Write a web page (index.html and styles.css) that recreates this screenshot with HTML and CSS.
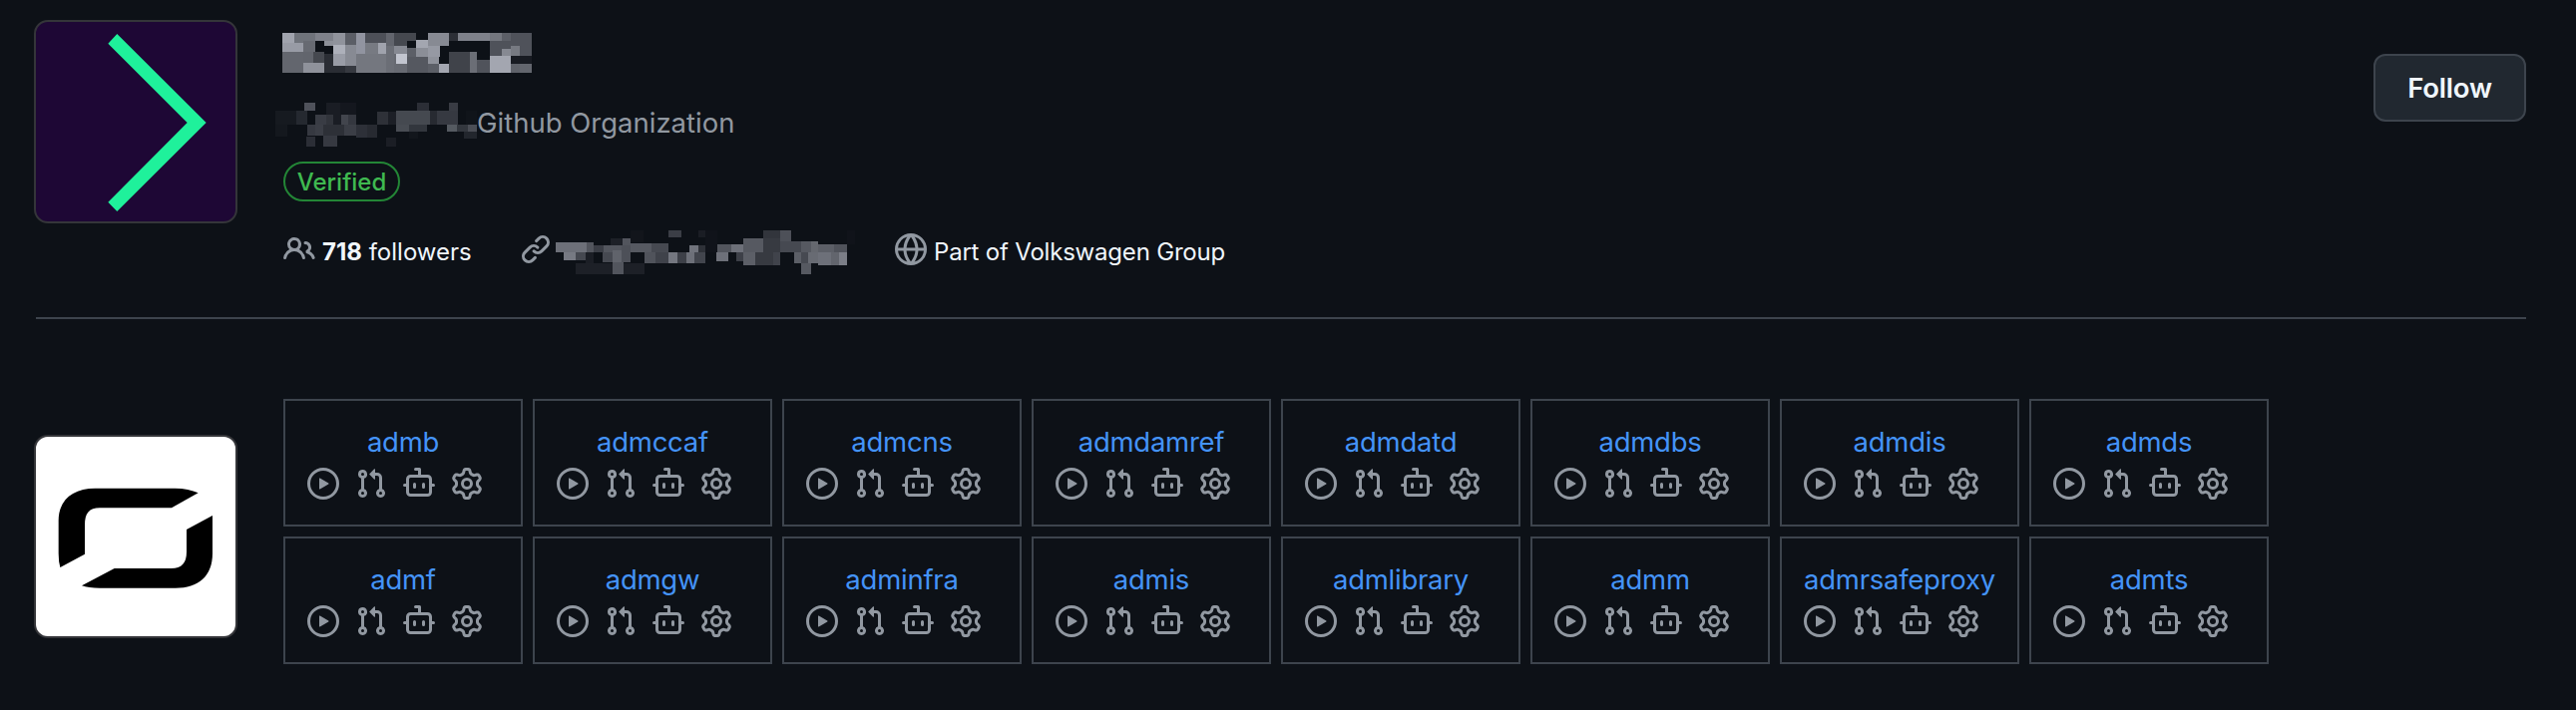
FILE: index.html
```
<!DOCTYPE html>
<html lang="en">
<head>
<meta charset="utf-8">
<title>Organization overview</title>
<link rel="stylesheet" href="styles.css">
</head>
<body>
<svg class="sprite" aria-hidden="true">
  <symbol id="people" viewBox="0 0 16 16"><path d="M2 5.5a3.5 3.5 0 1 1 5.898 2.549 5.508 5.508 0 0 1 3.034 4.084.75.75 0 1 1-1.482.235 4 4 0 0 0-7.9 0 .75.75 0 0 1-1.482-.236A5.507 5.507 0 0 1 3.102 8.05 3.493 3.493 0 0 1 2 5.5ZM11 4a3.001 3.001 0 0 1 2.22 5.018 5.01 5.01 0 0 1 2.56 3.012.749.749 0 0 1-.885.954.752.752 0 0 1-.549-.514 3.507 3.507 0 0 0-2.522-2.372.75.75 0 0 1-.574-.73v-.352a.75.75 0 0 1 .416-.672A1.5 1.5 0 0 0 11 5.5.75.75 0 0 1 11 4Zm-5.5-.5a2 2 0 1 0-.001 3.999A2 2 0 0 0 5.5 3.5Z"/></symbol>
  <symbol id="link" viewBox="0 0 16 16"><path d="m7.775 3.275 1.25-1.25a3.5 3.5 0 1 1 4.95 4.95l-2.5 2.5a3.5 3.5 0 0 1-4.95 0 .751.751 0 0 1 .018-1.042.751.751 0 0 1 1.042-.018 1.998 1.998 0 0 0 2.83 0l2.5-2.5a2.002 2.002 0 0 0-2.83-2.83l-1.25 1.25a.751.751 0 0 1-1.042-.018.751.751 0 0 1-.018-1.042Zm-4.69 9.64a1.998 1.998 0 0 0 2.83 0l1.25-1.25a.751.751 0 0 1 1.042.018.751.751 0 0 1 .018 1.042l-1.25 1.25a3.5 3.5 0 1 1-4.95-4.95l2.5-2.5a3.5 3.5 0 0 1 4.95 0 .751.751 0 0 1-.018 1.042.751.751 0 0 1-1.042.018 1.998 1.998 0 0 0-2.83 0l-2.5 2.5a1.998 1.998 0 0 0 0 2.83Z"/></symbol>
  <symbol id="globe" viewBox="0 0 16 16"><path d="M8 0a8 8 0 1 1 0 16A8 8 0 0 1 8 0ZM5.78 8.75a9.64 9.64 0 0 0 1.363 4.177c.255.426.542.832.857 1.215.245-.296.551-.705.857-1.215A9.64 9.64 0 0 0 10.22 8.75Zm4.44-1.5a9.64 9.64 0 0 0-1.363-4.177c-.307-.51-.612-.919-.857-1.215a9.927 9.927 0 0 0-.857 1.215A9.64 9.64 0 0 0 5.78 7.25Zm-5.944 1.5H1.543a6.507 6.507 0 0 0 4.666 5.5c-.123-.181-.24-.365-.352-.552-.715-1.192-1.437-2.874-1.581-4.948Zm-2.733-1.5h2.733c.144-2.074.866-3.756 1.58-4.948.12-.197.237-.381.353-.552a6.507 6.507 0 0 0-4.666 5.5Zm10.181 1.5c-.144 2.074-.866 3.756-1.58 4.948-.12.197-.237.381-.353.552a6.507 6.507 0 0 0 4.666-5.5Zm2.733-1.5a6.507 6.507 0 0 0-4.666-5.5c.123.181.24.365.353.552.714 1.192 1.436 2.874 1.58 4.948Z"/></symbol>
  <symbol id="play" viewBox="0 0 16 16"><path d="M8 0a8 8 0 1 1 0 16A8 8 0 0 1 8 0ZM1.5 8a6.5 6.5 0 1 0 13 0 6.5 6.5 0 0 0-13 0Zm4.879-2.773 4.264 2.559a.25.25 0 0 1 0 .428l-4.264 2.559A.25.25 0 0 1 6 10.559V5.442a.25.25 0 0 1 .379-.215Z"/></symbol>
  <symbol id="pull" viewBox="0 0 16 16"><path d="M1.5 3.25a2.25 2.25 0 1 1 3 2.122v5.256a2.251 2.251 0 1 1-1.5 0V5.372A2.25 2.25 0 0 1 1.5 3.25Zm5.677-.177L9.573.677A.25.25 0 0 1 10 .854V2.5h1A2.5 2.5 0 0 1 13.5 5v5.628a2.251 2.251 0 1 1-1.5 0V5a1 1 0 0 0-1-1h-1v1.646a.25.25 0 0 1-.427.177L7.177 3.427a.25.25 0 0 1 0-.354ZM3.75 2.5a.75.75 0 1 0 0 1.5.75.75 0 0 0 0-1.5Zm0 9.5a.75.75 0 1 0 0 1.5.75.75 0 0 0 0-1.5Zm8.25.75a.75.75 0 1 0 1.5 0 .75.75 0 0 0-1.5 0Z"/></symbol>
  <symbol id="bot" viewBox="0 0 16 16"><path d="M5.75 7.5a.75.75 0 0 1 .75.75v1.5a.75.75 0 0 1-1.5 0v-1.5a.75.75 0 0 1 .75-.75Zm5.25.75a.75.75 0 0 0-1.5 0v1.5a.75.75 0 0 0 1.5 0v-1.5Z"/><path d="M6.25 0h2A.75.75 0 0 1 9 .75V3.5h3.25a2.25 2.25 0 0 1 2.25 2.25V8h.75a.75.75 0 0 1 0 1.5h-.75v2.75a2.25 2.25 0 0 1-2.25 2.25h-8.5a2.25 2.25 0 0 1-2.25-2.25V9.5H.75a.75.75 0 0 1 0-1.5h.75V5.75A2.25 2.25 0 0 1 3.75 3.5H7.5v-2H6.25a.75.75 0 0 1 0-1.5ZM3 5.75v6.5c0 .414.336.75.75.75h8.5a.75.75 0 0 0 .75-.75v-6.5a.75.75 0 0 0-.75-.75h-8.5a.75.75 0 0 0-.75.75Z"/></symbol>
  <symbol id="gear" viewBox="0 0 16 16"><path d="M8 0a8.2 8.2 0 0 1 .701.031C9.444.095 9.99.645 10.16 1.29l.288 1.107c.018.066.079.158.212.224.231.114.454.243.668.386.123.082.233.09.299.071l1.103-.303c.644-.176 1.392.021 1.82.63.27.385.506.792.704 1.218.315.675.111 1.422-.364 1.891l-.814.806c-.049.048-.098.147-.088.294.016.257.016.515 0 .772-.01.147.038.246.088.294l.814.806c.475.469.679 1.216.364 1.891a7.977 7.977 0 0 1-.704 1.217c-.428.61-1.176.807-1.82.63l-1.102-.302c-.067-.019-.177-.011-.3.071a5.909 5.909 0 0 1-.668.386c-.133.066-.194.158-.211.224l-.29 1.106c-.168.646-.715 1.196-1.458 1.26a8.006 8.006 0 0 1-1.402 0c-.743-.064-1.289-.614-1.458-1.26l-.289-1.106c-.018-.066-.079-.158-.212-.224a5.738 5.738 0 0 1-.668-.386c-.123-.082-.233-.09-.299-.071l-1.103.303c-.644.176-1.392-.021-1.82-.63a8.12 8.12 0 0 1-.704-1.218c-.315-.675-.111-1.422.363-1.891l.815-.806c.05-.048.098-.147.088-.294a6.214 6.214 0 0 1 0-.772c.01-.147-.038-.246-.088-.294l-.815-.806C.635 6.045.431 5.298.746 4.623a7.92 7.92 0 0 1 .704-1.217c.428-.61 1.176-.807 1.82-.63l1.102.302c.067.019.177.011.3-.071.214-.143.437-.272.668-.386.133-.066.194-.158.211-.224l.29-1.106C6.009.645 6.556.095 7.299.03 7.53.01 7.764 0 8 0Zm-.571 1.525c-.036.003-.108.036-.137.146l-.289 1.105c-.147.561-.549.967-.998 1.189-.173.086-.34.183-.5.29-.417.278-.97.423-1.529.27l-1.103-.303c-.109-.03-.175.016-.195.045-.22.312-.412.644-.573.99-.014.031-.021.11.059.19l.815.806c.411.406.562.957.53 1.456a4.709 4.709 0 0 0 0 .582c.032.499-.119 1.05-.53 1.456l-.815.806c-.081.08-.073.159-.059.19.162.346.353.677.573.989.02.03.085.076.195.046l1.102-.303c.56-.153 1.113-.008 1.53.27.161.107.328.204.501.29.447.222.85.629.997 1.189l.289 1.105c.029.109.101.143.137.146a6.6 6.6 0 0 0 1.142 0c.036-.003.108-.036.137-.146l.289-1.105c.147-.561.549-.967.998-1.189.173-.086.34-.183.5-.29.417-.278.97-.423 1.529-.27l1.103.303c.109.029.175-.016.195-.045.22-.313.411-.644.573-.99.014-.031.021-.11-.059-.19l-.815-.806c-.411-.406-.562-.957-.53-1.456a4.709 4.709 0 0 0 0-.582c-.032-.499.119-1.05.53-1.456l.815-.806c.081-.08.073-.159.059-.19a6.464 6.464 0 0 0-.573-.989c-.02-.03-.085-.076-.195-.046l-1.102.303c-.56.153-1.113.008-1.53-.27a4.44 4.44 0 0 0-.501-.29c-.447-.222-.85-.629-.997-1.189l-.289-1.105c-.029-.11-.101-.143-.137-.146a6.6 6.6 0 0 0-1.142 0ZM11 8a3 3 0 1 1-6 0 3 3 0 0 1 6 0ZM9.5 8a1.5 1.5 0 1 0-3.001.001A1.5 1.5 0 0 0 9.5 8Z"/></symbol>
</svg>

<header class="org">
  <div class="avatar avatar-org">
    <svg viewBox="48 36 600 600"><path d="M292 72 560 339 292 606 265 578 503 339 265 101Z" class="chevron"/></svg>
  </div>
  <div class="org-info">
    <svg class="mosaic-name" viewBox="39 39 750 120" id="m-name"></svg>
    <div class="tagline"><svg class="mosaic-tag" viewBox="18 249 606 132" id="m-tag"></svg><span class="tagline-text">Github Organization</span></div>
    <div class="badge">Verified</div>
    <div class="meta">
      <div class="meta-item followers"><svg class="icon"><use href="#people"/></svg><span class="meta-text"><b>718</b> followers</span></div>
      <div class="meta-item site"><svg class="icon"><use href="#link"/></svg><svg class="mosaic-site" viewBox="141 33 900 132" id="m-site"></svg></div>
      <div class="meta-item group"><svg class="icon"><use href="#globe"/></svg><span class="meta-text part">Part of Volkswagen Group</span></div>
    </div>
  </div>
  <button class="follow">Follow</button>
</header>
<hr class="rule">
<main class="team">
  <div class="avatar avatar-team">
    <svg viewBox="48 54 600 600"><path d="M121 447Q116 430 116 405V306C116 243 160 209 226 209H466Q508 209 536 223L456 268H240C208 268 195 284 195 320V407ZM579 291V404C579 474 536 509 468 509H240Q205 509 186 502L284 450H455C487 450 501 434 501 400V333Z"/></svg>
  </div>
  <div class="grid" id="grid"></div>
</main>
<script src="app.js"></script>
</body>
</html>
```
FILE: styles.css
```
* { box-sizing: border-box; }
body {
  margin: 0;
  height: 712px;
  overflow: hidden;
  background: #0d1117;
  color: #f0f6fc;
  font-family: Inter, "Liberation Sans", sans-serif;
}
svg { display: block; flex: none; }
.sprite { display: none; }
.icon { width: 32px; height: 32px; fill: #9198a1; }
.org {
  display: flex;
  align-items: flex-start;
  height: 318px;
  padding: 20px 50px 0 34px;
}
.avatar {
  flex: none;
  width: 204px;
  height: 204px;
  margin-right: 46px;
  border: 2px solid #343539;
  border-radius: 14px;
  overflow: hidden;
}
.avatar svg { width: 200px; height: 200px; }
.avatar-org { background: #1e0735; }
.chevron { fill: #1ff19b; }
.avatar-team { margin-top: 36px; background: #fff; }
.org-info { flex: 1; padding-top: 13px; }
.mosaic-name { width: 250px; height: 40px; margin-left: -1px; }
.mosaic-tag { width: 202px; height: 44px; margin-left: -8px; }
.mosaic-site { width: 300px; height: 44px; margin: 0 0 0 4px; }
.tagline { display: flex; height: 44px; margin-top: 30px; }
.tagline-text {
  font-size: 27.5px;
  line-height: 40px;
  color: #9198a1;
  white-space: nowrap;
}
.badge {
  width: 117px;
  height: 40px;
  margin-top: 15px;
  border: 2px solid #238636;
  border-radius: 20px;
  color: #3fb950;
  font-size: 24px;
  font-weight: 500;
  line-height: 38px;
  text-align: center;
}
.meta { display: flex; margin-top: 29px; height: 44px; }
.meta-item { display: flex; }
.meta-item .icon { margin-top: 3px; }
.followers { width: 237px; }
.site { width: 376px; }
.meta-text {
  margin-left: 7px;
  font-size: 24px;
  line-height: 44px;
  white-space: nowrap;
}
.part { letter-spacing: -0.2px; }
.follow {
  width: 153px;
  height: 68px;
  margin-top: 34px;
  padding: 0;
  border: 2px solid #3d444d;
  border-radius: 12px;
  background: #212830;
  color: #f0f6fc;
  font: 600 27.5px/64px Inter, "Liberation Sans", sans-serif;
  letter-spacing: -0.2px;
}
.rule { height: 2px; margin: 0 50px 0 36px; border: 0; background: #3d444d; }
.team { display: flex; padding: 80px 0 0 34px; }
.grid { display: grid; grid-template-columns: repeat(8, 240px); grid-auto-rows: 128px; gap: 10px; }
.cell { border: 2px solid #3d444d; padding: 22px 22px 0; }
.cell-name {
  display: block;
  margin: 0 -20px;
  height: 45px;
  color: #4493f8;
  font-size: 27.5px;
  letter-spacing: -0.25px;
  line-height: 38px;
  text-align: center;
}
.cell-icons { display: flex; gap: 16px; }
```
FILE: app.js
```
const names = ["admb", "admccaf", "admcns", "admdamref", "admdatd", "admdbs", "admdis", "admds",
  "admf", "admgw", "adminfra", "admis", "admlibrary", "admm", "admrsafeproxy", "admts"];
document.getElementById("grid").innerHTML = names.map(name =>
  `<div class="cell"><a class="cell-name"><span>${name}</span></a><div class="cell-icons">` +
  ["play", "pull", "bot", "gear"].map(i => `<svg class="icon"><use href="#${i}"/></svg>`).join("") +
  `</div></div>`).join("");

// Redaction blocks: left, top, right, bottom, colour
const blocks = {
  "m-name": [
    [39,39,75,69,"#a0a3ad"],[75,39,138,69,"#6f737b"],[138,39,192,63,"#7e818a"],[192,39,228,75,"#90939c"],
    [228,39,261,75,"#5b5e66"],[261,39,288,102,"#9194a0"],[288,39,351,69,"#4d5058"],[351,39,375,78,"#62656d"],
    [375,39,441,78,"#45484f"],[477,39,540,78,"#878a93"],[540,39,567,63,"#2c2f36"],[567,39,663,63,"#7e818a"],
    [663,39,699,63,"#74777f"],[699,39,726,63,"#5c5f67"],[726,39,789,108,"#4f525a"],[663,63,726,108,"#4f525a"],
    [39,69,102,96,"#989ba5"],[102,63,138,96,"#676a72"],[165,63,192,78,"#8d9099"],[192,75,228,138,"#999ca6"],
    [192,75,228,102,"#adb0ba"],[228,75,261,138,"#878a93"],[288,69,327,102,"#777a82"],[327,69,351,102,"#a0a3ad"],
    [351,78,375,159,"#6b6e76"],[375,78,414,102,"#868992"],[414,84,441,111,"#5c5f67"],[414,63,441,84,"#0d1117"],[441,60,477,84,"#a3a6b0"],
    [441,84,477,111,"#8b8e97"],[477,78,513,111,"#9699a3"],[477,111,510,132,"#8f929b"],[699,87,726,108,"#868992"],
    [726,78,753,108,"#777a82"],[39,96,102,159,"#63666e"],[102,96,132,129,"#62656d"],[132,96,165,129,"#45484f"],
    [165,102,192,159,"#2a2d34"],[192,138,228,159,"#2a2d34"],[228,138,261,159,"#363940"],[102,129,165,159,"#8f929b"],
    [261,102,351,159,"#74777f"],[375,102,414,159,"#676a72"],[381,102,414,132,"#c2c5cf"],[414,111,477,159,"#555860"],
    [477,132,510,159,"#5c5f67"],[510,132,540,159,"#a3a6b0"],[540,96,603,159,"#40434a"],[603,96,624,159,"#6b6e76"],
    [624,120,663,159,"#50535b"],[663,108,726,159,"#a3a6b0"],[726,108,789,132,"#181b22"],[726,132,753,159,"#5f626a"],[753,132,789,159,"#63666e"]
  ],
  "m-tag": [
    [18,273,81,315,"#161a20"],[18,315,54,351,"#14181e"],[81,273,114,315,"#252930"],[105,249,138,273,"#4f525b"],
    [171,249,213,285,"#1a1d24"],[213,249,261,285,"#14171e"],[138,285,171,315,"#393c44"],[171,285,192,315,"#31343b"],
    [216,285,237,315,"#42454d"],[237,285,261,315,"#34373f"],[192,285,216,315,"#1a1d24"],[114,315,138,348,"#363941"],
    [138,315,162,348,"#3b3e46"],[162,315,225,348,"#2d3037"],[225,315,261,348,"#3b3e46"],[261,315,294,354,"#2d3038"],
    [294,315,324,354,"#272a31"],[111,351,138,381,"#2b2e36"],[162,348,204,381,"#363941"],[324,276,357,315,"#2e3138"],
    [357,276,381,315,"#1c1f26"],[381,273,483,315,"#454950"],[381,315,420,336,"#484c53"],[420,315,474,336,"#32363d"],
    [444,249,480,273,"#2b2e36"],[483,273,504,315,"#272a31"],[504,273,567,315,"#363941"],[540,249,567,273,"#393c44"],
    [351,354,381,381,"#1b1e25"],[420,336,447,357,"#12161c"],[534,315,564,336,"#555a61"],[564,315,597,336,"#33373e"],
    [597,315,624,336,"#4b4e56"],[585,336,624,357,"#22262d"],[591,273,624,315,"#10141a"]
  ],
  "m-site": [
    [141,69,234,99,"#6d7079"],[234,69,255,99,"#52555d"],[165,99,201,123,"#777a83"],[201,99,231,123,"#454850"],
    [255,78,285,99,"#3b3e46"],[231,99,255,132,"#1b1e25"],[306,57,342,78,"#1d2027"],[342,57,366,78,"#52555d"],
    [366,33,405,69,"#12151b"],[285,78,339,99,"#53565e"],[282,99,312,129,"#464951"],[312,93,339,129,"#60636b"],
    [339,78,366,129,"#4d5058"],[366,72,429,99,"#565961"],[429,72,480,99,"#464951"],[408,99,441,132,"#50535b"],
    [441,99,480,132,"#3f424a"],[201,132,312,165,"#1d2027"],[312,129,345,165,"#52555d"],[345,132,408,165,"#1d2027"],
    [480,33,519,54,"#3b3e46"],[480,99,507,132,"#747780"],[507,99,534,132,"#3d4048"],[534,99,558,132,"#6d7079"],
    [543,78,570,99,"#70737c"],[570,78,591,99,"#2e3138"],[558,99,591,132,"#42454d"],[570,33,591,54,"#1a1d24"],[591,33,627,99,"#10131a"],
    [627,75,669,99,"#52555d"],[669,75,705,99,"#6d7079"],[624,99,660,126,"#6d7079"],[684,99,705,126,"#3d4048"],
    [705,57,765,99,"#565961"],[705,99,741,138,"#5c5f67"],[765,33,816,57,"#32353c"],[765,57,816,99,"#373a41"],
    [741,99,795,138,"#373a41"],[795,99,816,138,"#40434b"],[816,33,849,66,"#4d5058"],[816,66,879,99,"#464951"],
    [879,66,909,99,"#565961"],[909,66,930,99,"#65686f"],[930,75,978,99,"#5c5f67"],[978,75,1017,99,"#50535b"],
    [858,99,879,132,"#5c5f67"],[879,99,900,132,"#464951"],[900,99,930,132,"#686b73"],[930,99,969,138,"#6d7079"],
    [969,99,993,138,"#62656d"],[993,99,1017,138,"#7b7e87"],[879,132,909,165,"#565961"],[1017,33,1041,75,"#10131a"]
  ]
};
for (const [id, list] of Object.entries(blocks)) {
  document.getElementById(id).innerHTML = list.map(([l, t, r, b, c]) =>
    `<rect x="${l}" y="${t}" width="${r - l}" height="${b - t}" fill="${c}" shape-rendering="crispEdges"/>`).join("");
}
```
